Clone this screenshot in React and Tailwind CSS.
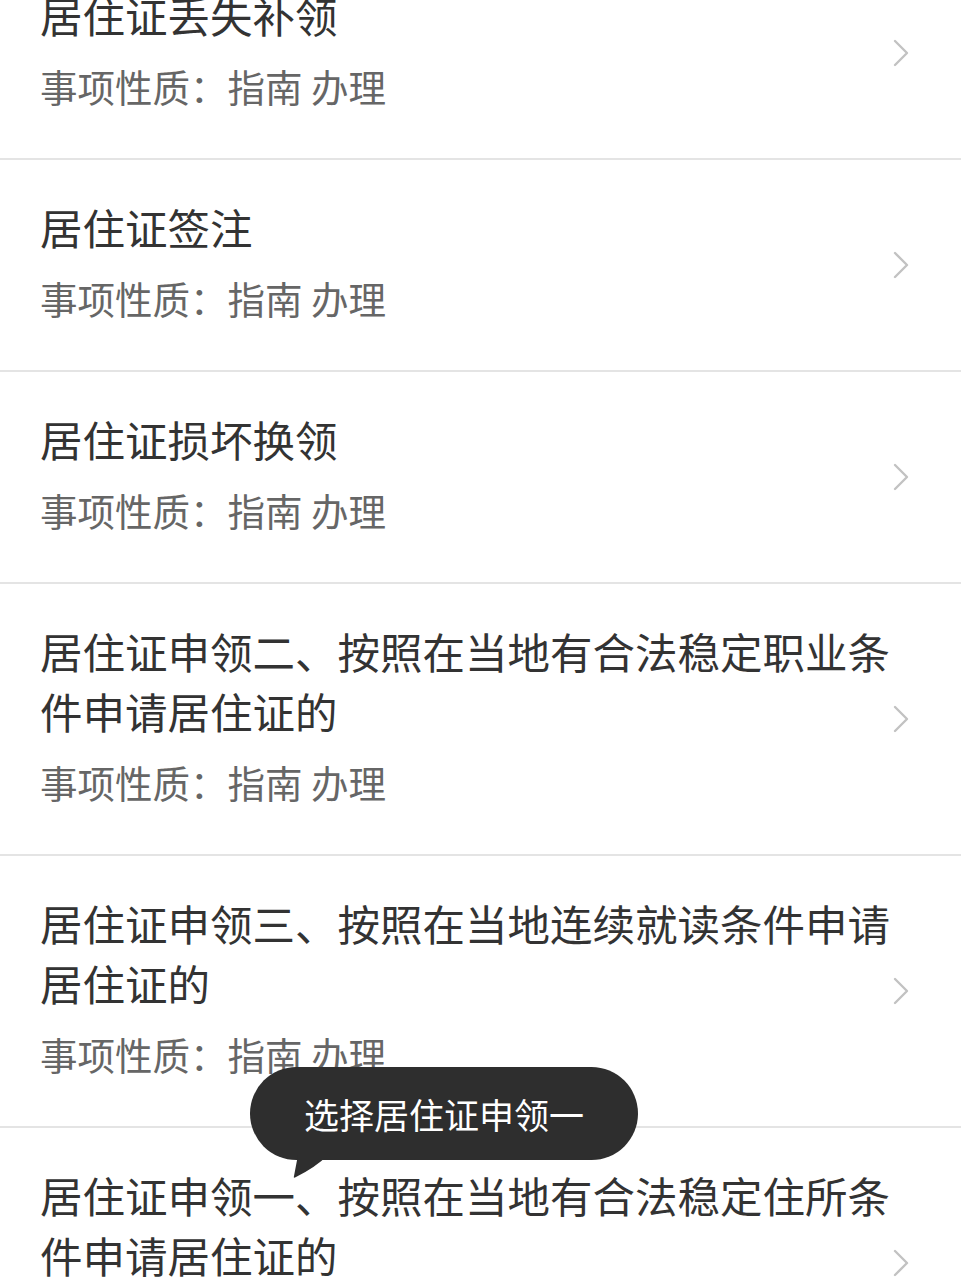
import React from 'react';

const items = [
  '居住证丢失补领',
  '居住证签注',
  '居住证损坏换领',
  '居住证申领二、按照在当地有合法稳定职业条件申请居住证的',
  '居住证申领三、按照在当地连续就读条件申请居住证的',
  '居住证申领一、按照在当地有合法稳定住所条件申请居住证的',
];

function Chevron() {
  return (
    <svg width="16" height="28" viewBox="0 0 16 28" className="shrink-0">
      <polyline points="2,2 14,14 2,26" fill="none" stroke="#c2c2c2" strokeWidth="2.4" strokeLinecap="round" strokeLinejoin="round" />
    </svg>
  );
}

function Row({ title }) {
  return (
    <div className="flex items-center pl-[40px] pr-[52px] border-b-2 border-[#e4e4e4] bg-white">
      <div className="flex-1 min-w-0 pt-[37px] pb-[50px]">
        <p className="w-[866px] text-[42.5px] leading-[60px] text-[#333333]">{title}</p>
        <p className="mt-[19px] text-[37.5px] leading-[44px] text-[#666666]">事项性质：指南 办理</p>
      </div>
      <Chevron />
    </div>
  );
}

export default function App() {
  return (
    <div
      className="relative w-[961px] h-[1280px] overflow-hidden bg-white"
      style={{ fontFamily: '"Noto Sans CJK SC", "Noto Sans", sans-serif' }}
    >
      <div className="-mt-[52px]">
        {items.map((t, i) => (
          <Row key={i} title={t} />
        ))}
      </div>

      {/* toast bubble */}
      <div className="absolute left-[250px] top-[1067px]">
        <div className="w-[388px] h-[93px] rounded-full bg-[#2e2e2e] flex items-center justify-center">
          <span className="text-[35px] leading-none text-white">选择居住证申领一</span>
        </div>
        <svg width="40" height="24" viewBox="0 0 40 24" className="absolute left-[40px] top-[88px]">
          <path d="M8 0 L4 21 Q3 24 6 22 Q26 12 38 0 Z" fill="#2e2e2e" />
        </svg>
      </div>
    </div>
  );
}
